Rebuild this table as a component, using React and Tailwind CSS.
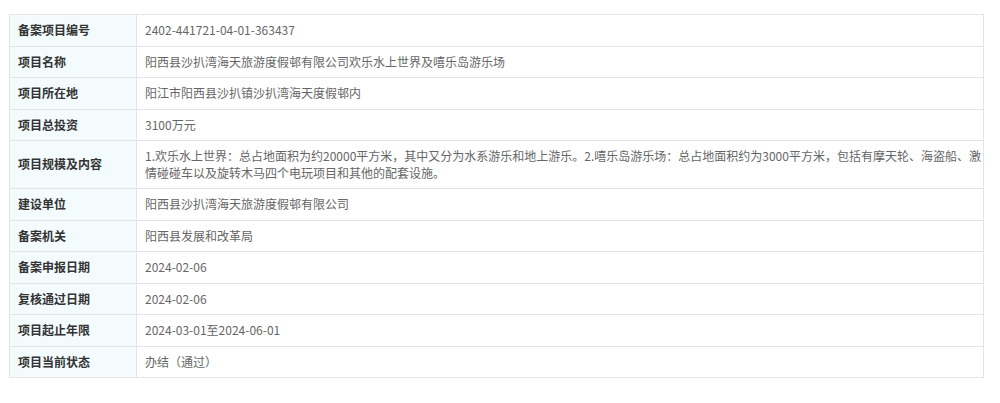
import React from "react"

const rows = [
  ["备案项目编号", "2402-441721-04-01-363437"],
  ["项目名称", "阳西县沙扒湾海天旅游度假邨有限公司欢乐水上世界及嘻乐岛游乐场"],
  ["项目所在地", "阳江市阳西县沙扒镇沙扒湾海天度假邨内"],
  ["项目总投资", "3100万元"],
  ["项目规模及内容", [
    "1.欢乐水上世界：总占地面积为约20000平方米，其中又分为水系游乐和地上游乐。2.嘻乐岛游乐场：总占地面积约为3000平方米，包括有摩天轮、海盗船、激",
    "情碰碰车以及旋转木马四个电玩项目和其他的配套设施。"
  ]],
  ["建设单位", "阳西县沙扒湾海天旅游度假邨有限公司"],
  ["备案机关", "阳西县发展和改革局"],
  ["备案申报日期", "2024-02-06"],
  ["复核通过日期", "2024-02-06"],
  ["项目起止年限", "2024-03-01至2024-06-01"],
  ["项目当前状态", "办结（通过）"],
]

const App = () => {
  return (
    <div className="w-[1000px] h-[403px] bg-white pt-[14px] pl-[9px]"
      style={ { fontFamily: '"Microsoft YaHei", "Noto Sans CJK SC", sans-serif' } }>
      <table className="w-[975px] border-collapse text-[12px] leading-[16.5px] table-fixed">
        <colgroup>
          <col className="w-[127px]"/>
          <col/>
        </colgroup>
        <tbody>
          { rows.map(([label, value], i) =>
            <tr key={ i }>
              <td className="border border-[#e4e4e4] bg-[#f3fbfd] px-[8px] py-[7px] font-bold text-[#333333] align-middle">
                { label }
              </td>
              <td className="border border-[#e4e4e4] px-[8px] py-[7px] text-[#666666] align-middle">
                { Array.isArray(value)
                  ? value.map((line, j) =>
                      <div key={ j } className="whitespace-nowrap">{ line }</div>
                    )
                  : value
                }
              </td>
            </tr>
          )}
        </tbody>
      </table>
    </div>
  )
}
export default App;
